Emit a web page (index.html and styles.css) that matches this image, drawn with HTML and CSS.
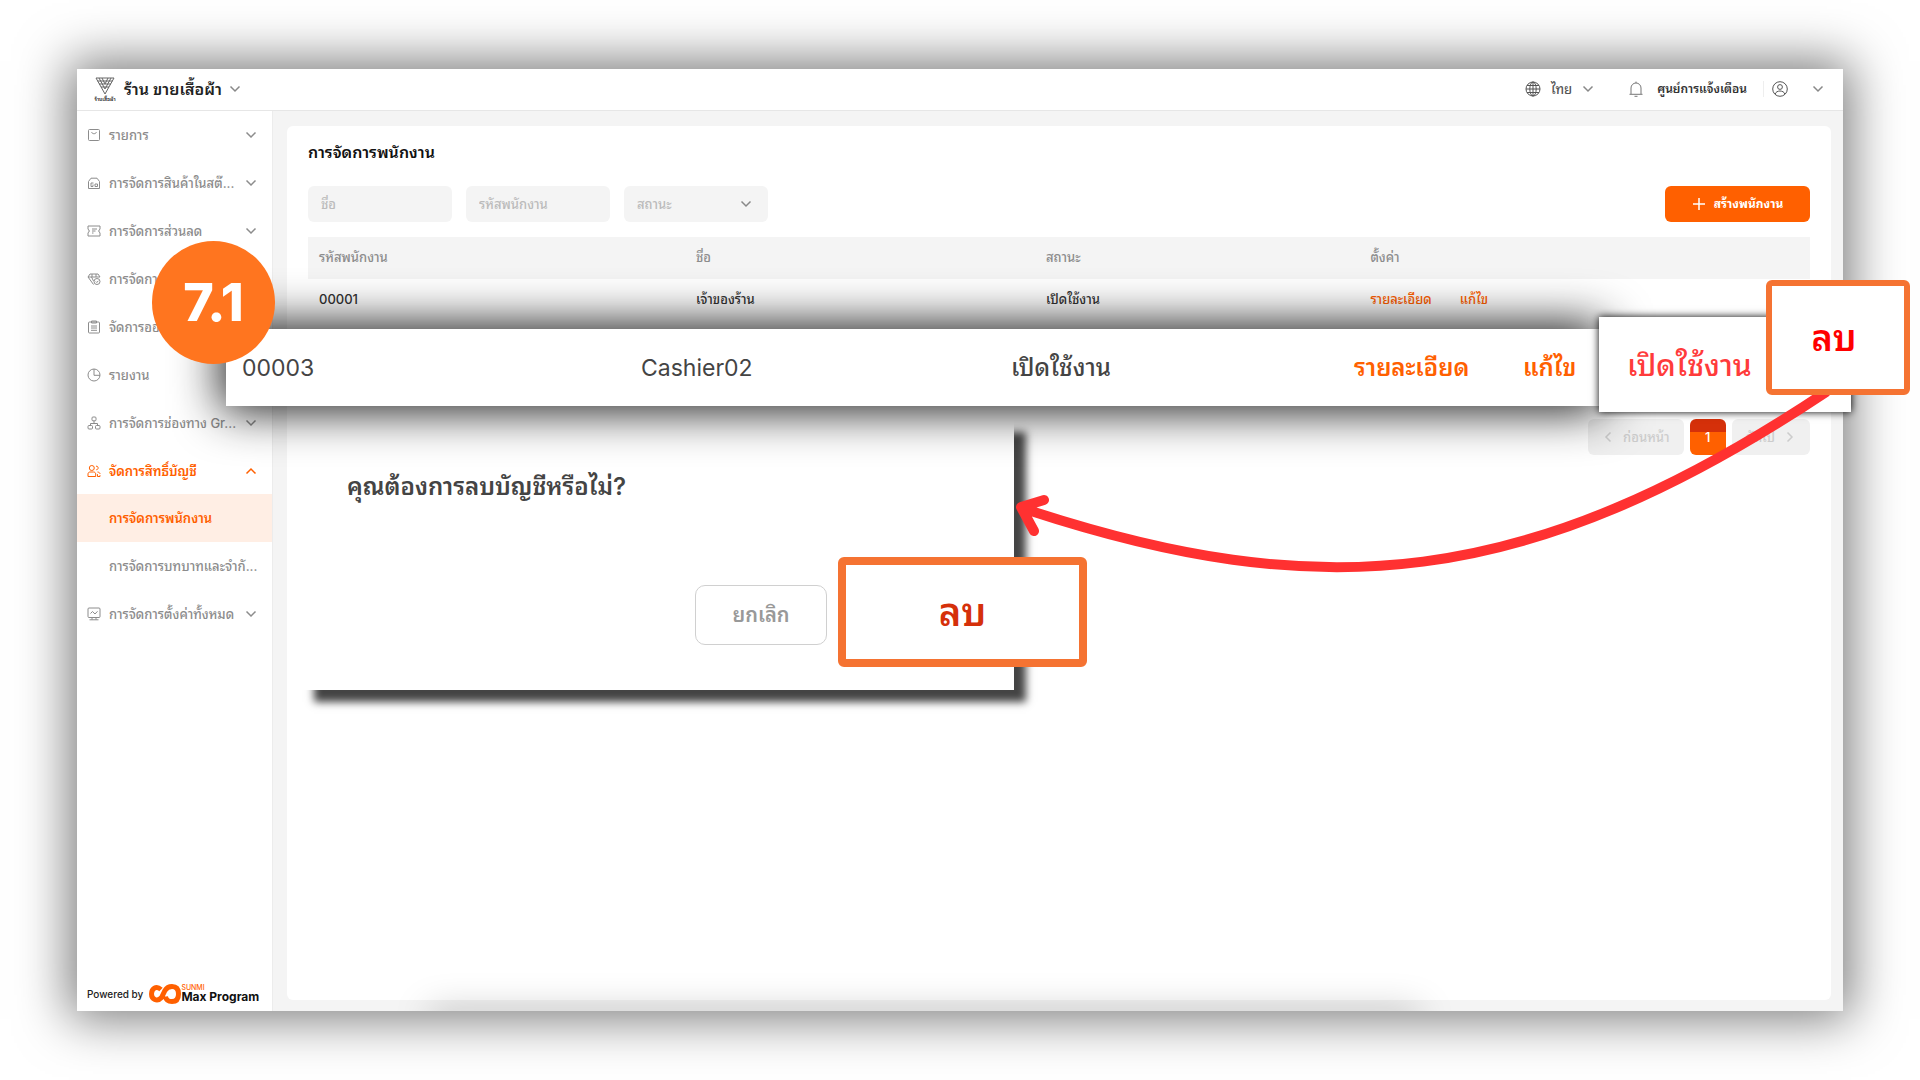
FILE: index.html
```html
<!DOCTYPE html>
<html lang="th">
<head>
<meta charset="utf-8">
<title>การจัดการพนักงาน</title>
<link rel="stylesheet" href="styles.css">
</head>
<body>
<svg class="sprite" aria-hidden="true">
  <symbol id="chev" viewBox="0 0 12 12"><path d="M1.5 3.500 6 8l4.500-4.500"/></symbol>
  <symbol id="bag" viewBox="0 0 14 14"><rect x="1.500" y="1.500" width="11" height="11" rx="1"/><path d="M4.500 4c.8 2.300 4.200 2.300 5 0"/></symbol>
  <symbol id="store" viewBox="0 0 14 14"><path d="M1.500 5.500 4 2.200h6l2.500 3.300v7h-11zM4 7v3.500M4 7h2.500M6 8.500v2h-2M8 10.500h2.500V8H8z"/></symbol>
  <symbol id="ticket" viewBox="0 0 14 14"><path d="M1 2h12v3.300a1.800 1.800 0 0 0 0 3.400V12H1V8.700a1.800 1.800 0 0 0 0-3.400zM5 5h5M5 7h3.500M5 9h1.500"/></symbol>
  <symbol id="gem" viewBox="0 0 14 14"><path d="M3 2h8l2 3H1zM1 5l5.500 7.500M4.500 5l2 4M5 2v3M9 2v3"/><circle cx="10" cy="9.500" r="3"/><path d="m8.800 9.500 1 1 1.500-1.700"/></symbol>
  <symbol id="clip" viewBox="0 0 14 14"><rect x="1.500" y="2" width="11" height="11" rx="1"/><path d="M4.500 1h5v2h-5zM4 6h6M4 8h6M4 10.300h6"/></symbol>
  <symbol id="pie" viewBox="0 0 14 14"><circle cx="7" cy="7" r="6"/><path d="M7 1v6.300h6"/></symbol>
  <symbol id="tree" viewBox="0 0 14 14"><rect x="5" y="1" width="4" height="3.800" rx="1"/><path d="M7 5v2.500M3.500 9.500v-2h7v2"/><rect x="1" y="9.500" width="4.500" height="3.500" rx="1"/><rect x="8.500" y="9.500" width="4.500" height="3.500" rx="1"/></symbol>
  <symbol id="users" viewBox="0 0 14 14"><circle cx="4.800" cy="4" r="2.500"/><path d="M1 12.500V10c0-1.300 1-2 2-2h3.500c1.300 0 2.200.8 2.200 2v2.500zM9 2.200c2.700-.5 2.900 3.500.3 3.600M10.500 8c1.700.2 2.500 1 2.500 2M10.500 10.200v2.300H13v-1.300"/></symbol>
  <symbol id="monitor" viewBox="0 0 14 14"><rect x="1" y="1" width="12" height="9.500" rx="1"/><path d="m3.500 6.500 2-2 2.500 2.500 2.500-2.700M5 10.500v2M9 10.500v2M2.500 12.800h9"/></symbol>
  <symbol id="globe" viewBox="0 0 16 16"><circle cx="8" cy="8" r="7"/><ellipse cx="8" cy="8" rx="3.200" ry="7"/><path d="M1 8h14M8 1v14M2 4.500h12M2 11.500h12"/></symbol>
  <symbol id="bell" viewBox="0 0 16 16"><path d="M1.500 13.300h13M3 13V7a5 5 0 0 1 10 0v6M8 2V.6M6.500 15.300h3"/></symbol>
  <symbol id="user" viewBox="0 0 16 16"><circle cx="8" cy="8" r="7.300"/><circle cx="8" cy="6" r="2.400"/><path d="M3.200 13c1-4 8.600-4 9.600 0"/></symbol>
</svg>

<main class="window">
  <header class="topbar">
    <button class="shop" type="button">
      <svg class="shop-logo" viewBox="0 0 24 26" aria-hidden="true">
        <path d="M3 2h18l-9 16zM6 2l6 11 6-11M9 2l3 6 3-6M4.500 5h15M6 8h12M8 11h8"/>
        <text x="12" y="25">ร้านเสื้อผ้า</text>
      </svg>
      <span>ร้าน ขายเสื้อผ้า</span>
      <svg class="chev"><use href="#chev"/></svg>
    </button>
    <div class="tools">
      <button class="tool lang" type="button"><svg><use href="#globe"/></svg><span>ไทย</span><svg class="chev"><use href="#chev"/></svg></button>
      <button class="tool notice" type="button"><svg><use href="#bell"/></svg><span>ศูนย์การแจ้งเตือน</span></button>
      <button class="tool account" type="button" aria-label="บัญชี"><svg><use href="#user"/></svg><svg class="chev"><use href="#chev"/></svg></button>
    </div>
  </header>

  <div class="body">
    <aside class="sidebar">
      <nav class="menu">
        <a class="item" href="#"><svg><use href="#bag"/></svg><span>รายการ</span><svg class="chev"><use href="#chev"/></svg></a>
        <a class="item" href="#"><svg><use href="#store"/></svg><span>การจัดการสินค้าในสต๊...</span><svg class="chev"><use href="#chev"/></svg></a>
        <a class="item" href="#"><svg><use href="#ticket"/></svg><span>การจัดการส่วนลด</span><svg class="chev"><use href="#chev"/></svg></a>
        <a class="item" href="#"><svg><use href="#gem"/></svg><span>การจัดการ</span><svg class="chev"><use href="#chev"/></svg></a>
        <a class="item" href="#"><svg><use href="#clip"/></svg><span>จัดการออ</span></a>
        <a class="item" href="#"><svg><use href="#pie"/></svg><span>รายงาน</span></a>
        <a class="item" href="#"><svg><use href="#tree"/></svg><span>การจัดการช่องทาง Gr...</span><svg class="chev"><use href="#chev"/></svg></a>
        <a class="item open" href="#"><svg><use href="#users"/></svg><span>จัดการสิทธิ์บัญชี</span><svg class="chev up"><use href="#chev"/></svg></a>
        <a class="item sub current" href="#"><span>การจัดการพนักงาน</span></a>
        <a class="item sub" href="#"><span>การจัดการบทบาทและจำกั...</span></a>
        <a class="item" href="#"><svg><use href="#monitor"/></svg><span>การจัดการตั้งค่าทั้งหมด</span><svg class="chev"><use href="#chev"/></svg></a>
      </nav>
      <footer class="powered">
        <span>Powered by</span>
        <svg class="brand-mark" viewBox="0 0 32 20" aria-hidden="true"><path d="M12 5.500C7 1 2.500 5 2.500 10S8 18.500 12.500 13.500L16 6.500C18 3 20 2.500 23 2.500c4 0 6.500 2.500 6.500 7.500S27 17.500 23 17.500c-4 0-6-1.500-6.500-5"/></svg>
        <span class="brand"><small>SUNMI</small><b>Max Program</b></span>
      </footer>
    </aside>

    <section class="content">
      <div class="card">
        <h1>การจัดการพนักงาน</h1>
        <form class="filters">
          <input type="text" placeholder="ชื่อ" aria-label="ชื่อ">
          <input type="text" placeholder="รหัสพนักงาน" aria-label="รหัสพนักงาน">
          <div class="select"><select aria-label="สถานะ"><option>สถานะ</option></select><svg class="chev"><use href="#chev"/></svg></div>
          <button class="create" type="button"><svg viewBox="0 0 14 14"><path d="M7 1v12M1 7h12"/></svg>สร้างพนักงาน</button>
        </form>
        <table class="staff">
          <thead><tr><th class="c1">รหัสพนักงาน</th><th class="c2">ชื่อ</th><th class="c3">สถานะ</th><th>ตั้งค่า</th></tr></thead>
          <tbody><tr><td>00001</td><td>เจ้าของร้าน</td><td>เปิดใช้งาน</td><td><a href="#">รายละเอียด</a><a href="#">แก้ไข</a></td></tr></tbody>
        </table>
        <div class="pager">
          <button type="button"><svg class="chev left"><use href="#chev"/></svg>ก่อนหน้า</button>
          <button class="page" type="button">1</button>
          <button type="button">ถัดไป<svg class="chev right"><use href="#chev"/></svg></button>
        </div>
      </div>
    </section>
  </div>
</main>

<div class="dialog" role="dialog" aria-labelledby="ask">
  <h2 id="ask">คุณต้องการลบบัญชีหรือไม่?</h2>
  <button class="cancel" type="button">ยกเลิก</button>
</div>
<div class="zoom-row">
  <span class="z1">00003</span><span class="z2">Cashier02</span><span class="z3">เปิดใช้งาน</span><a class="z4" href="#">รายละเอียด</a><a href="#">แก้ไข</a>
</div>
<button class="enable" type="button">เปิดใช้งาน</button>
<svg class="arrow" viewBox="0 0 840 200" aria-hidden="true"><path d="M818 3C518 203 310 216 20 121M36 111 13 118l13 24"/></svg>
<button class="mark mark-row" type="button">ลบ</button>
<button class="mark mark-dialog" type="button">ลบ</button>
<div class="step">7.1</div>
</body>
</html>
```
FILE: styles.css
```css
* { box-sizing: border-box; }
body {
  margin: 0;
  min-height: 100vh;
  padding: 69px 77px;
  display: flex;
  position: relative;
  overflow: hidden;
  background: #fff;
  color: #333;
  font: 500 13px/20px Inter, "Noto Sans Thai Looped", "Noto Looped Thai", Loma, Waree, Garuda, "Noto Sans Thai", "Noto Sans", sans-serif;
}
button, input, select { font: inherit; color: inherit; border: 0; background: none; padding: 0; margin: 0; }
a { color: inherit; text-decoration: none; }
svg { width: 14px; height: 14px; flex: none; fill: none; stroke: currentColor; stroke-width: 1; }
.sprite { position: absolute; width: 0; height: 0; }
.chev { width: 12px; height: 12px; stroke-width: 1.500; }
.up { transform: rotate(180deg); }
.left { transform: rotate(90deg); }
.right { transform: rotate(-90deg); }

.window { flex: 1; display: flex; flex-direction: column; background: #fff; box-shadow: 0 0 48px 8px rgba(0, 0, 0, .52); }
.topbar { height: 42px; display: flex; justify-content: space-between; align-items: center; padding: 0 19px 2px 16px; border-bottom: 1px solid #e6e6e6; }
.shop { display: flex; align-items: center; gap: 7px; font-size: 16px; font-weight: 600; color: #222; }
.shop .chev, .tools .chev { color: #888; }
.shop-logo { width: 24px; height: 26px; stroke: #666; }
.shop-logo text { font-size: 5px; text-anchor: middle; fill: #222; stroke: none; }
.tools { display: flex; align-items: center; }
.tool { display: flex; align-items: center; gap: 10px; color: #555; }
.tool svg:first-child { width: 16px; height: 16px; }
.notice { margin-left: 34px; gap: 13px; font-size: 12px; font-weight: 600; color: #333; }
.notice svg { color: #777; }
.account { margin-left: 16px; padding-left: 8px; gap: 24px; border-left: 1px solid #eee; }

.body { flex: 1; display: flex; }
.sidebar { width: 195px; display: flex; flex-direction: column; justify-content: space-between; }
.item { display: flex; align-items: center; height: 48px; padding: 0 15px 0 10px; gap: 8px; color: #8c8c8c; }
.item span { flex: 1; white-space: nowrap; }
.item.open, .item.current { color: #ff6000; font-weight: 600; }
.item.open { height: 47px; }
.item.sub { padding-left: 32px; }
.item.current { background: #ffeee4; }
.powered { display: flex; align-items: center; height: 34px; padding-left: 10px; color: #222; font-size: 10px; gap: 6px; }
.brand-mark { width: 32px; height: 20px; stroke: #ff6000; stroke-width: 5; }
.brand { display: flex; flex-direction: column; margin-left: -6px; color: #111; }
.brand small { font-size: 7px; line-height: 6px; color: #ff6000; }
.brand b { font-size: 12px; line-height: 12px; font-weight: 700; }

.content { position: relative; overflow: hidden; flex: 1; display: flex; padding: 15px 12px 11px 14px; background: #f4f4f4; border-left: 1px solid #ececec; }
.content::after { content: ""; position: absolute; left: 10%; right: 27%; bottom: -20px; height: 20px; box-shadow: 0 0 36px rgba(0, 0, 0, .25); }
.card { flex: 1; padding: 15px 21px 20px; border-radius: 6px; background: #fff; }
h1 { margin: 0 0 23px; font-size: 16px; line-height: 22px; font-weight: 600; color: #111; }
.filters { display: flex; gap: 14px; margin-bottom: 15px; }
.filters input, .select { width: 144px; height: 36px; border-radius: 6px; background: #f4f4f4; }
.filters input { padding: 0 13px; }
.filters input::placeholder { color: #bbb; opacity: 1; }
.select { display: flex; align-items: center; padding: 0 16px 0 13px; color: #bbb; }
.select select { flex: 1; appearance: none; }
.select .chev { color: #888; }
.create { display: flex; align-items: center; justify-content: center; gap: 8px; width: 145px; height: 36px; margin-left: auto; border-radius: 6px; background: #ff6000; color: #fff; font-size: 12px; font-weight: 700; }
.create svg { stroke-width: 1.500; }
.staff { width: 100%; table-layout: fixed; border-collapse: collapse; }
.staff th, .staff td { height: 42px; padding: 0 11px 2px; text-align: left; }
.staff th { font-weight: 500; color: #8c8c8c; background: #f4f4f4; }
.staff a { margin-right: 28px; color: #ff6000; }
.c1 { width: 25.100%; }
.c2 { width: 23.300%; }
.c3 { width: 21.600%; }
.pager { display: flex; justify-content: flex-end; gap: 6px; margin-top: 98px; color: #ccc; }
.pager button { display: flex; align-items: center; justify-content: center; gap: 9px; height: 36px; padding: 0 14px; border-radius: 6px; background: #f0f0f0; }
.pager .page { width: 36px; padding: 0; color: #fff; background: linear-gradient(#d5300a 13px, #ff6000 13px); }

.dialog { position: absolute; left: 302px; top: 420px; width: 712px; height: 270px; padding: 49px 45px; background: #fff; box-shadow: 12px 12px 8px #444; display: flex; flex-direction: column; }
.dialog h2 { margin: 0; font-size: 24px; line-height: 36px; font-weight: 600; color: #444; }
.cancel { flex: none; width: 132px; height: 60px; margin: 80px 0 0 348px; border: 1px solid #d0d0d0; border-radius: 10px; font-size: 20px; font-weight: 600; color: #999; }
.zoom-row { position: absolute; left: 226px; top: 329px; width: 1373px; height: 77px; padding-left: 16px; display: flex; align-items: center; background: #fff; box-shadow: 0 0 48px 4px rgba(0, 0, 0, .92); font-size: 23px; line-height: 36px; color: #444; }
.zoom-row a { font-size: 24px; color: #ff6000; font-weight: 600; }
.z1 { width: 399px; font-weight: 400; }
.z2 { width: 370px; font-weight: 400; }
.z3 { width: 343px; font-size: 24px; }
.z4 { width: 169px; }
.enable { position: absolute; left: 1599px; top: 317px; width: 252px; height: 95px; padding-left: 28px; background: #fff; box-shadow: 0 0 8px #000; text-align: left; font-size: 30px; color: #ff3b3b; }
.mark { position: absolute; border: 6px solid #f57332; border-radius: 6px; background: #fff; font-weight: 600; color: #f00; }
.mark-row { left: 1766px; top: 280px; width: 144px; height: 115px; padding-right: 8px; font-size: 36px; }
.mark-dialog { left: 838px; top: 557px; width: 249px; height: 110px; border-width: 8px; font-size: 38px; color: #d5300a; }
.arrow { position: absolute; left: 1008px; top: 389px; width: 840px; height: 200px; stroke: #ff3131; stroke-width: 10; stroke-linecap: round; stroke-linejoin: round; }
.step { position: absolute; left: 152px; top: 241px; width: 123px; height: 123px; border-radius: 50%; background: #ff751f; color: #fff; font-size: 52px; line-height: 123px; font-weight: 800; text-align: center; }
```
